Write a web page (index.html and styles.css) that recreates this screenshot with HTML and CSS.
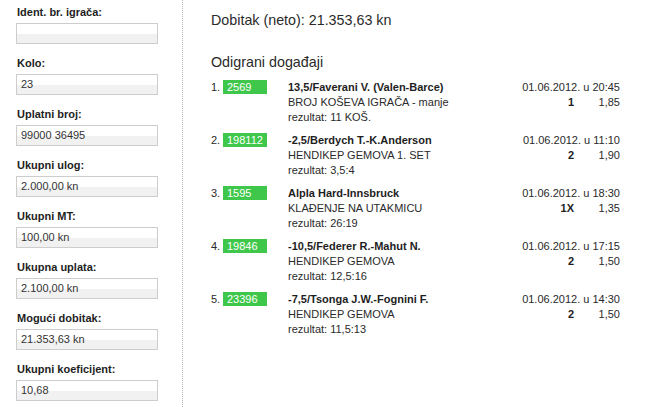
FILE: index.html
```html
<!DOCTYPE html>
<html lang="hr">
<head>
<meta charset="utf-8">
<title>Listić</title>
<link rel="stylesheet" href="styles.css">
</head>
<body>
<div class="page">
  <aside class="sidebar">
    <div class="field"><div class="label">Ident. br. igrača:</div><div class="input"></div></div>
    <div class="field"><div class="label">Kolo:</div><div class="input">23</div></div>
    <div class="field"><div class="label">Uplatni broj:</div><div class="input">99000 36495</div></div>
    <div class="field"><div class="label">Ukupni ulog:</div><div class="input">2.000,00 kn</div></div>
    <div class="field"><div class="label">Ukupni MT:</div><div class="input">100,00 kn</div></div>
    <div class="field"><div class="label">Ukupna uplata:</div><div class="input">2.100,00 kn</div></div>
    <div class="field"><div class="label">Mogući dobitak:</div><div class="input">21.353,63 kn</div></div>
    <div class="field"><div class="label">Ukupni koeficijent:</div><div class="input">10,68</div></div>
  </aside>
  <main class="content">
    <h2 class="win">Dobitak (neto): 21.353,63 kn</h2>
    <h2 class="events-title">Odigrani događaji</h2>
    <div class="events">
      <div class="event">
        <div class="num">1.</div>
        <div class="code"><span class="badge">2569</span></div>
        <div class="info">
          <div class="title">13,5/Faverani V. (Valen-Barce)</div>
          <div>BROJ KOŠEVA IGRAČA - manje</div>
          <div>rezultat: 11 KOŠ.</div>
        </div>
        <div class="meta">
          <div class="date">01.06.2012. u 20:45</div>
          <div class="tip"><span class="sel">1</span><span class="odds">1,85</span></div>
        </div>
      </div>
      <div class="event">
        <div class="num">2.</div>
        <div class="code"><span class="badge">198112</span></div>
        <div class="info">
          <div class="title">-2,5/Berdych T.-K.Anderson</div>
          <div>HENDIKEP GEMOVA 1. SET</div>
          <div>rezultat: 3,5:4</div>
        </div>
        <div class="meta">
          <div class="date">01.06.2012. u 11:10</div>
          <div class="tip"><span class="sel">2</span><span class="odds">1,90</span></div>
        </div>
      </div>
      <div class="event">
        <div class="num">3.</div>
        <div class="code"><span class="badge">1595</span></div>
        <div class="info">
          <div class="title">Alpla Hard-Innsbruck</div>
          <div>KLAĐENJE NA UTAKMICU</div>
          <div>rezultat: 26:19</div>
        </div>
        <div class="meta">
          <div class="date">01.06.2012. u 18:30</div>
          <div class="tip"><span class="sel">1X</span><span class="odds">1,35</span></div>
        </div>
      </div>
      <div class="event">
        <div class="num">4.</div>
        <div class="code"><span class="badge">19846</span></div>
        <div class="info">
          <div class="title">-10,5/Federer R.-Mahut N.</div>
          <div>HENDIKEP GEMOVA</div>
          <div>rezultat: 12,5:16</div>
        </div>
        <div class="meta">
          <div class="date">01.06.2012. u 17:15</div>
          <div class="tip"><span class="sel">2</span><span class="odds">1,50</span></div>
        </div>
      </div>
      <div class="event">
        <div class="num">5.</div>
        <div class="code"><span class="badge">23396</span></div>
        <div class="info">
          <div class="title">-7,5/Tsonga J.W.-Fognini F.</div>
          <div>HENDIKEP GEMOVA</div>
          <div>rezultat: 11,5:13</div>
        </div>
        <div class="meta">
          <div class="date">01.06.2012. u 14:30</div>
          <div class="tip"><span class="sel">2</span><span class="odds">1,50</span></div>
        </div>
      </div>
    </div>
  </main>
</div>
</body>
</html>
```

FILE: styles.css
```css
* { box-sizing: border-box; }
html, body { margin: 0; padding: 0; background: #fff; }
body {
  font-family: "Liberation Sans", Arial, sans-serif;
  font-size: 11px;
  color: #2a2a2a;
  width: 666px;
  height: 407px;
  overflow: hidden;
}
.page {
  display: flex;
  height: 407px;
}
.sidebar {
  width: 183px;
  flex: none;
  padding: 5px 0 0 16px;
  border-right: 1px dotted #b5b5b5;
}
.field { margin-bottom: 12px; }
.label {
  font-weight: bold;
  line-height: 14px;
  color: #1e1e1e;
  padding-left: 1px;
  margin-bottom: 4px;
}
.input {
  width: 142px;
  height: 21px;
  border: 1px solid #cdcdcd;
  background: linear-gradient(#ffffff 0, #ffffff 52%, #f1f1f1 52%, #f1f1f1 100%);
  padding: 0 4px;
  line-height: 19px;
  color: #333;
}
.content {
  flex: 1;
  padding: 12px 46px 0 28px;
}
h2 {
  margin: 0;
  font-weight: normal;
  font-size: 14.3px;
  line-height: 17px;
  color: #2a2a2a;
}
.win { margin-bottom: 25px; }
.events-title { margin-bottom: 9px; }
.event {
  display: flex;
  line-height: 15px;
  margin-bottom: 8px;
}
.num { width: 12px; flex: none; }
.code { width: 65px; flex: none; }
.badge {
  display: block;
  width: 44px;
  height: 14px;
  line-height: 14px;
  padding-left: 4px;
  background: #3fc74b;
  color: #fff;
}
.info { flex: 1; }
.title { font-weight: bold; color: #1e1e1e; }
.meta { width: 110px; flex: none; text-align: right; }
.tip { display: flex; justify-content: flex-end; }
.sel { font-weight: bold; color: #1e1e1e; }
.odds { width: 46px; text-align: right; }
```
